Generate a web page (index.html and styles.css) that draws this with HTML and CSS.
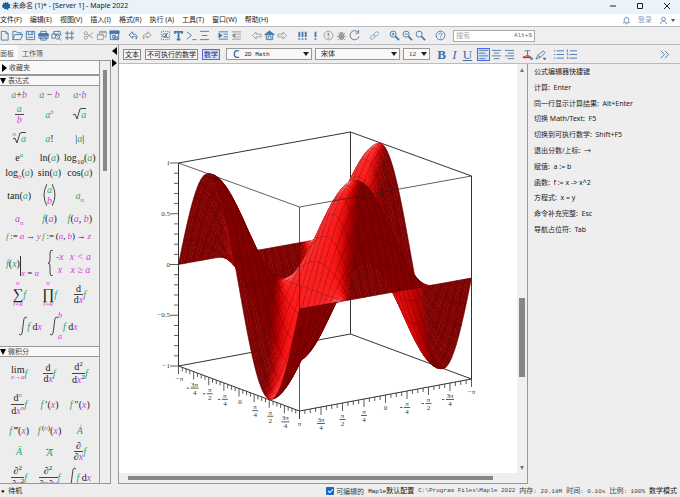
FILE: index.html
```html
<!DOCTYPE html>
<html lang="zh-CN">
<head>
<meta charset="utf-8">
<title>未命名 (1)* - [Server 1] - Maple 2022</title>
<link rel="stylesheet" href="styles.css">
</head>
<body>
<div class="app">
<header class="titlebar">
  <svg class="leaf" viewBox="0 0 12 12"><path d="M5 1l1.500 1.500L8.500 1l.5 2.500 2.500.5-1 2 1 2.500-3 .5.2 2L6 9.500 3.500 10 4 8 1.500 8.500 2 6.500.5 5.500l2-1L2.500 2l2 .8z"/></svg>
  <span class="caption">未命名 (1)* - [Server 1] - Maple 2022</span>
  <div class="window-buttons">
    <button aria-label="最小化"><svg viewBox="0 0 12 12"><path d="M3 6h6"/></svg></button>
    <button aria-label="最大化"><svg viewBox="0 0 12 12"><path d="M3.500 3.500h5v5h-5z"/></svg></button>
    <button aria-label="关闭"><svg viewBox="0 0 12 12"><path d="M3 3l6 6M9 3l-6 6"/></svg></button>
  </div>
</header>
<nav class="menubar">
  <button>文件(F)</button><button>编辑(E)</button><button>视图(V)</button><button>插入(I)</button><button>格式(R)</button><button>执行 (A)</button><button>工具(T)</button><button>窗口(W)</button><button>帮助(H)</button>
  <div class="account">
    <button aria-label="通知"><svg class="ic" viewBox="0 0 12 12"><path d="M2 9h8L9 7.500V5a3 3 0 0 0-6 0v2.500zM5 10.500h2M6 1v1"/></svg></button>
    <a href="#">登录</a>
    <button class="user" aria-label="账户"><svg class="ic" viewBox="0 0 12 12"><circle cx="6" cy="4" r="2.500"/><path d="M2 11c.3-3 2-4 4-4s3.700 1 4 4"/></svg><i class="caret"></i></button>
  </div>
</nav>
<div class="toolbar">
  <div class="half">
    <div class="group">
      <button aria-label="新建"><svg class="ic" viewBox="0 0 12 12"><path d="M2.500 1.500h5l2.500 2.500v7H2.500zM7.500 1.500V4H10"/></svg></button>
      <button aria-label="打开"><svg class="ic" viewBox="0 0 12 12"><path d="M1 10.500V1.500h3.500l1 1.500H10v2M1 10.500L3 5h8.500L9.500 10.500z"/></svg></button>
      <button aria-label="保存"><svg class="ic" viewBox="0 0 12 12"><path d="M1.500 1.500h9v9h-9zM3.500 1.500v3.500h5V1.500M7 2.500v1.500M3 8h6"/></svg></button>
      <button aria-label="打印"><svg class="ic" viewBox="0 0 12 12"><path d="M3 4V1.500h6V4M1 4.500h10V9H1zM3 7.500h6v3.500H3z"/><path class="solid" d="M1 4h10v2.500H1z"/></svg></button>
      <button aria-label="打印预览"><svg class="ic" viewBox="0 0 12 12"><path d="M3 4V1.500h7V4M1 9V4.500h10V6M1 9h3"/><circle cx="7" cy="7.500" r="2.500"/><path d="M9 9.500l2 2M3 3l5 5"/></svg></button>
      <button aria-label="表格"><svg class="ic" viewBox="0 0 12 12"><path d="M3.500 1v10M8.500 1v10M1 3.500h10M1 8.500h10"/></svg></button>
    </div>
    <div class="group gray">
      <button aria-label="剪切"><svg class="ic" viewBox="0 0 12 12"><circle cx="3" cy="3.500" r="1.700"/><circle cx="3" cy="8.500" r="1.700"/><path d="M4.500 4.500L11 9M4.500 7.500L11 3"/></svg></button>
      <button aria-label="复制"><svg class="ic" viewBox="0 0 12 12"><path d="M4 4V1.500h7v6H8.500M1.500 4.500h6.500v6H1.500zM4 2.500h7M1.500 5.500H8"/></svg></button>
      <button class="blue" aria-label="粘贴"><svg class="ic" viewBox="0 0 12 12"><path d="M1.500 1.500h9v9h-9z"/><path class="solid" d="M1 1h10v3H1z"/><path d="M4 6h3v3H4zM6 7.500h3.500v2.500H6z"/></svg></button>
    </div>
    <div class="group">
      <button aria-label="撤消"><svg class="ic" viewBox="0 0 12 12"><path d="M5 2L1 5.500 5 9V7q4-1 4 3 3-5-4-6z"/></svg></button>
      <button class="gray" aria-label="重做"><svg class="ic" viewBox="0 0 12 12"><path d="M7 2l4 3.500L7 9V7q-4-1-4 3-3-5 4-6z"/></svg></button>
    </div>
    <div class="group">
      <button aria-label="插入区域"><svg class="ic" viewBox="0 0 12 12"><path class="dots" d="M1.500 1.500h9v9h-9z"/><circle cx="5" cy="6" r="2"/><path d="M7 3.500l-.5 4.500h3M4 8l5-5"/></svg></button>
      <button aria-label="文本"><svg class="ic bold" viewBox="0 0 12 12"><path d="M2 4V2h8v2M6 2v8.500M4 10.500h4"/></svg></button>
      <button aria-label="提示符"><svg class="ic" viewBox="0 0 12 12"><path d="M1 2l5 4-5 4M7 10.500h4.500"/></svg></button>
      <button aria-label="节"><svg class="ic" viewBox="0 0 12 12"><path d="M1 1.500h10M3 6h6M1 10.500h10"/></svg></button>
    </div>
    <div class="group">
      <button aria-label="缩进"><svg class="ic" viewBox="0 0 12 12"><path d="M1 2h10M6 4.500h5M6 7.500h5M1 10h10"/><path class="solid" d="M1 3.500L4.500 6 1 8.500z"/></svg></button>
      <button class="gray" aria-label="取消缩进"><svg class="ic" viewBox="0 0 12 12"><path d="M1 2h10M6 4.500h5M6 7.500h5M1 10h10"/><path class="solid" d="M4.500 3.500L1 6l3.500 2.500z"/></svg></button>
    </div>
  </div>
  <div class="half loose">
    <div class="group gray">
      <button aria-label="后退"><svg class="ic" viewBox="0 0 12 12"><path d="M5.500 2L1.500 6l4 4V7.500H11v-3H5.500z"/></svg></button>
      <button class="blue" aria-label="主页"><svg class="ic" viewBox="0 0 12 12"><path class="solid" d="M6 1L.8 5h10.400z"/><path d="M2.500 5v5.500h7V5M4.500 10V6.500h3V10"/></svg></button>
      <button aria-label="前进"><svg class="ic" viewBox="0 0 12 12"><path d="M6.500 2l4 4-4 4V7.500H1v-3h5.500z"/></svg></button>
    </div>
    <div class="group">
      <button aria-label="全部执行"><svg class="ic bold" viewBox="0 0 12 12"><path d="M2.500 2v5.500M2.500 9v1.500M6 2v5.500M6 9v1.500M9.500 2v5.500M9.500 9v1.500"/></svg></button>
      <button aria-label="执行"><svg class="ic bold" viewBox="0 0 12 12"><path d="M6 2v5.500M6 9v1.500"/></svg></button>
      <button class="gray" aria-label="中断"><svg class="ic" viewBox="0 0 12 12"><circle cx="6" cy="6" r="4.800"/><path class="heavy" d="M6 3v3.500M6 8v1.200"/></svg></button>
      <button class="gray" aria-label="调试"><svg class="ic" viewBox="0 0 12 12"><ellipse class="solid" cx="6" cy="7" rx="2.600" ry="3.500"/><path d="M6 2v2M2 3l2 2M10 3L8 5M1 7h10M2 11l2-2M10 11L8 9M4 3h4"/></svg></button>
      <button aria-label="重新启动"><svg class="ic" viewBox="0 0 12 12"><path d="M10 2.500A5 5 0 1 0 11 7M10.500 0v3.500H7"/></svg></button>
    </div>
    <div class="group">
      <button class="pale" aria-label="链接"><svg class="ic" viewBox="0 0 12 12"><ellipse cx="4" cy="7.700" rx="2.800" ry="2" transform="rotate(-40 4 7.700)"/><ellipse cx="8" cy="4.300" rx="2.800" ry="2" transform="rotate(-40 8 4.300)"/></svg></button>
    </div>
    <div class="group">
      <button aria-label="放大"><svg class="ic" viewBox="0 0 12 12"><circle cx="4.500" cy="4.500" r="3.300"/><path d="M3 4.500h3M4.500 3v3"/><path class="heavy" d="M7 7l4 4"/></svg></button>
      <button aria-label="缩小"><svg class="ic" viewBox="0 0 12 12"><circle cx="4.500" cy="4.500" r="3.300"/><path d="M3 4.500h3"/><path class="heavy" d="M7 7l4 4"/></svg></button>
      <button aria-label="默认缩放"><svg class="ic" viewBox="0 0 12 12"><circle cx="4.500" cy="4.500" r="3.300"/><path class="heavy" d="M7 7l4 4"/></svg></button>
    </div>
    <div class="group">
      <button aria-label="帮助"><svg class="ic" viewBox="0 0 12 12"><circle cx="6" cy="6" r="4.800"/><path d="M4.300 5c0-2.300 3.600-2.200 3.400 0C7.600 6 6 6 6 7.300M6 8.500v1"/></svg></button>
    </div>
  </div>
  <label class="search"><input type="text" placeholder="搜索" aria-label="搜索"><kbd>Alt+S</kbd></label>
</div>

<div class="body">
  <aside class="sidebar">
    <div class="tabs"><button class="on">面板</button><button>工作簿</button></div>
    <div class="palette-wrap">
      <div class="palettes">
        <h2 class="shut"><i class="closed"></i>收藏夹</h2>
        <h2 class="open"><i class="opened"></i>表达式</h2>
        <div class="grid h16"><span><a>a</a>+<b>b</b></span><span><a>a</a> − <b>b</b></span><span><a>a</a>·<b>b</b></span></div>
        <div class="grid h24"><span class="frac"><a>a</a><b>b</b></span><span><a>a</a><sup><b>b</b></sup></span><span class="root"><svg viewBox="0 0 8 12"><path d="M0 7l2-1 2 5L7 1h1"/></svg><a class="bar">a</a></span></div>
        <div class="grid h24"><span class="root"><b class="index">n</b><svg viewBox="0 0 8 12"><path d="M0 7l2-1 2 5L7 1h1"/></svg><a class="bar">a</a></span><span><a>a</a>!</span><span>|<a>a</a>|</span></div>
        <div class="grid h14"><span>e<sup><a>a</a></sup></span><span>ln(<a>a</a>)</span><span>log<sub>10</sub>(<a>a</a>)</span></div>
        <div class="grid h16"><span>log<sub><b>b</b></sub>(<a>a</a>)</span><span>sin(<a>a</a>)</span><span>cos(<a>a</a>)</span></div>
        <div class="grid h30"><span>tan(<a>a</a>)</span><span class="binom"><svg viewBox="0 0 4 22"><path d="M4 0Q-2 11 4 22"/></svg><span class="stack"><a>a</a><b>b</b></span><svg viewBox="0 0 4 22"><path d="M0 0Q6 11 0 22"/></svg></span><span><a>a</a><sub><b>n</b></sub></span></div>
        <div class="grid h16"><span><b>a</b><sub><b>n</b></sub></span><span><a>f</a>(<b>a</b>)</span><span><a>f</a>(<b>a</b>, <b>b</b>)</span></div>
        <div class="pair h20"><span><a>f</a>&thinsp;:=&thinsp;<b>a</b>&thinsp;→&thinsp;<b>y</b></span><span><a>f</a>&thinsp;:=&thinsp;(<b>a</b>,&thinsp;<b>b</b>)&thinsp;→&thinsp;<b>z</b></span></div>
        <div class="pair h34"><span class="at"><a>f</a>(<a>x</a>)<span class="where"><b>x</b> = <b>a</b></span></span><span class="cases"><svg viewBox="0 0 5 26"><path d="M5 0Q2 0 2 3v7q0 3-2 3 2 0 2 3v7q0 3 3 3"/></svg><span class="case-grid"><b>-x</b><b>x &lt; a</b><b>x</b><b>x ≥ a</b></span></span></div>
        <div class="grid h26"><span class="big"><span class="op"><b>n</b><em>∑</em><b>i=k</b></span><a>f</a></span><span class="big"><span class="op"><b>n</b><em>∏</em><b>i=k</b></span><a>f</a></span><span class="big"><span class="frac"><u>d</u><u>d<b>x</b></u></span><a>f</a></span></div>
        <div class="pair wide h40"><span class="big"><svg class="int" viewBox="0 0 8 20"><path d="M8 2Q5-1 4.500 6l-1 8Q3 21 0 18"/></svg><a>f</a>&nbsp;d<b>x</b></span><span class="big"><svg class="int" viewBox="0 0 8 20"><path d="M8 2Q5-1 4.500 6l-1 8Q3 21 0 18"/></svg><span class="limits"><b>b</b><b>a</b></span><a>f</a>&nbsp;d<b>x</b></span></div>
        <h2 class="open"><i class="opened"></i>微积分</h2>
        <div class="grid h32"><span class="big"><span class="op lim"><u>lim</u><b>x→a</b></span><a>f</a></span><span class="big"><span class="frac"><u>d</u><u>d<b>x</b></u></span><a>f</a></span><span class="big"><span class="frac tall"><u>d<sup>2</sup></u><u>d<b>x</b><sup>2</sup></u></span><a>f</a></span></div>
        <div class="grid h30"><span class="big"><span class="frac tall"><u>d<sup><b>n</b></sup></u><u>d<b>x</b><sup><b>n</b></sup></u></span><a>f</a></span><span><a>f</a>&thinsp;′(<b>x</b>)</span><span><a>f</a>&thinsp;″(<b>x</b>)</span></div>
        <div class="grid h22"><span><a>f</a>&thinsp;‴(<b>x</b>)</span><span><a>f</a><sup>&thinsp;(<b>n</b>)</sup>(<b>x</b>)</span><span><a>Ȧ</a></span></div>
        <div class="grid h20"><span><a>Ä</a></span><span class="dot"><i>...</i><a>A</a></span><span class="big"><span class="frac"><u>∂</u><u>∂<b>x</b></u></span><a>f</a></span></div>
        <div class="grid h32"><span class="big"><span class="frac tall"><u>∂<sup>2</sup></u><u>∂<b>x</b><sup>2</sup></u></span><a>f</a></span><span class="big"><span class="frac tall"><u>∂<sup>2</sup></u><u>∂<b>x</b>∂<b>y</b></u></span><a>f</a></span><span class="big"><svg class="int" viewBox="0 0 8 20"><path d="M8 2Q5-1 4.500 6l-1 8Q3 21 0 18"/></svg><a>f</a>&nbsp;d<b>x</b></span></div>
      </div>
      <div class="rail"><i></i></div>
    </div>
  </aside>
  <div class="splitter"><i class="to-left"></i><i class="to-right"></i></div>
  <section class="main">
    <div class="format">
      <div class="modes"><button>文本</button><button>不可执行的数学</button><button class="on">数学</button></div>
      <span class="pick style"><i class="c">C</i><select aria-label="样式"><option>2D Math</option></select></span>
      <span class="pick font"><select aria-label="字体"><option>宋体</option></select></span>
      <span class="pick size"><select aria-label="字号"><option>12</option></select></span>
      <div class="letters"><button class="bd">B</button><button class="it">I</button><button class="un">U</button></div>
      <div class="group aligns">
        <button class="picked" aria-label="左对齐"><svg class="ic" viewBox="0 0 12 12"><path d="M1 1.500h10M1 4.500h7M1 7.500h10M1 10.500h7"/></svg></button>
        <button aria-label="居中"><svg class="ic" viewBox="0 0 12 12"><path d="M1 1.500h10M3 4.500h6M1 7.500h10M3 10.500h6"/></svg></button>
        <button aria-label="右对齐"><svg class="ic" viewBox="0 0 12 12"><path d="M1 1.500h10M4 4.500h7M1 7.500h10M4 10.500h7"/></svg></button>
      </div>
      <div class="group">
        <button aria-label="文字颜色"><svg class="ic" viewBox="0 0 12 12"><path d="M3 2h6M6 2v5M4 7h4"/><path class="red" d="M1 9h9"/><path class="solid" d="M9 10h3l-1.500 2z"/></svg></button>
        <button aria-label="突出显示"><svg class="ic" viewBox="0 0 12 12"><path d="M1 11l2-4 6-5 2 2-5 5zM3 7l3 2"/><path class="solid" d="M9 10h3l-1.500 2z"/></svg></button>
      </div>
      <div class="group lists">
        <button aria-label="项目符号"><svg class="ic" viewBox="0 0 12 12"><path d="M4 2h8M4 6h8M4 10h8M1 2h1.500M1 6h1.500M1 10h1.500"/></svg></button>
        <button aria-label="编号"><svg class="ic" viewBox="0 0 12 12"><path d="M4 2h8M4 6h8M4 10h8M1.500 .5v3M1 5h1v2M1 9h1v2"/></svg></button>
      </div>
      <button class="more" aria-label="更多"><svg class="ic" viewBox="0 0 12 12"><path d="M2 2l4 4-4 4M6.500 2l4 4-4 4"/></svg></button>
    </div>
    <div class="work">
      <div class="sheet">
        <div class="page"><svg id="plot" viewBox="120 64 398 408" role="img" aria-label="三维图"></svg></div>
        <div class="vbar"><i class="up"></i><i class="thumb"></i><i class="down"></i></div>
        <div class="hbar"><i></i></div>
      </div>
      <aside class="tips">
        <p>公式编辑器快捷键</p><p>计算: &nbsp;Enter</p><p>同一行显示计算结果: &nbsp;Alt+Enter</p><p>切换 Math/Text: &nbsp;F5</p><p>切换到可执行数学: &nbsp;Shift+F5</p><p>退出分数/上标: &nbsp;→</p><p>赋值: &nbsp;a := b</p><p>函数: &nbsp;f := x -&gt; x^2</p><p>方程式: &nbsp;x = y</p><p>命令补充完整: &nbsp;Esc</p><p>导航占位符: &nbsp;Tab</p>
      </aside>
    </div>
  </section>
</div>
<footer class="status">
  <span class="ready">● <b>待机</b></span>
  <label class="editable"><input type="checkbox" checked><b>可编辑的</b></label>
  <span class="dark">Maple<b>默认配置</b></span><span>C:\Program Files\Maple 2022</span><span><b>内存</b>: 20.18M</span><span><b>时间</b>: 0.10s</span><span><b>比例</b>: 100%</span><span class="dark"><b>数学模式</b></span>
</footer>
</div>
<script src="plot.js"></script>
</body>
</html>
```
FILE: styles.css
```css
*{box-sizing:border-box}
body{margin:0;background:#eee;color:#222;font:7px/10px "Noto Sans","Noto Sans CJK SC",sans-serif;overflow:hidden}
button{border:0;padding:0;margin:0;background:none;font:inherit;color:inherit;white-space:nowrap}
p,h2{margin:0;font:inherit}
i{font-style:normal}
.app{display:flex;flex-direction:column;height:100vh}
.titlebar{display:flex;align-items:center;height:14px;flex:none;background:#ebf2f9;padding:0 0 2px 1px}
.leaf{width:10px;height:10px;fill:#14639b;margin-right:1px}
.caption{font-size:7px}
.window-buttons{margin-left:auto;display:flex;gap:15px;padding-right:7px}
.window-buttons button,.window-buttons svg{width:12px;height:12px;display:block}
.window-buttons svg{fill:none;stroke:#222;stroke-width:1}
.menubar{display:flex;align-items:center;gap:8px;height:12px;flex:none;background:#fff}
.account{margin-left:auto;display:flex;align-items:center;gap:7px;padding-right:5px;color:#8ca4c0}
.account a{color:inherit;text-decoration:none}
.account button{display:flex;align-items:center}
.account .ic{width:9px;height:9px}
.user{gap:3px}
.caret{border:2px solid transparent;border-top:3px solid #555;border-bottom:0}
.ic{width:11px;height:11px;display:block;fill:none;stroke:#4678aa;stroke-width:1}
.ic .solid{fill:#4678aa}
.ic .dots{stroke-dasharray:1 1}
.ic .red{stroke:#e02020;stroke-width:2}
.ic.bold,.ic .heavy{stroke-width:2}
.gray .ic{stroke:#9a9a9a}
.gray .ic .solid{fill:#9a9a9a}
.gray .blue .ic{stroke:#4678aa}
.gray .blue .solid{fill:#4678aa}
.pale .ic{stroke:#8faccb}
.toolbar{display:flex;align-items:center;height:19px;flex:none;border-top:1px solid #bbb;border-bottom:1px solid #bbb;background:#efefef}
.half{display:flex;gap:6px;margin-left:-2px}
.loose{gap:7px;margin-left:7px}
.group{display:flex}
.group button{width:13px;height:13px;display:grid;place-items:center}
.search{display:flex;align-items:center;width:82px;height:12px;margin-left:6px;background:#fff;border:1px solid #aaa;padding:0 2px}
.search input{border:0;outline:0;padding:0;min-width:0;flex:1;font:inherit;background:none}
.search input::placeholder{color:#aaa}
.search kbd{font:6px/8px "Liberation Mono",monospace;color:#666}
.body{display:flex;flex:1;min-height:0}
.sidebar{width:111px;flex:none;display:flex;flex-direction:column}
.tabs{display:flex;height:15px;flex:none;font-family:"Noto Sans CJK SC",sans-serif;color:#555}
.tabs button{padding:0 4px}
.tabs .on{background:#fafafa;padding:0 4px 0 0}
.palette-wrap{display:flex;flex:1;min-height:0;border:1px solid #999;border-left:0}
.palettes{flex:1;min-width:0;overflow:hidden}
.palettes h2{display:flex;align-items:center;gap:2px;background:#f8f8f8;border-bottom:1px solid #999;color:#444}
.palettes .shut{height:14px}
.palettes .open{height:11px;border-top:1px solid #999}
.closed{width:5px;height:0;border:4px solid transparent;border-left:5px solid #000;border-right:0;margin-left:2px}
.opened{width:6px;border:3px solid transparent;border-top:6px solid #000;border-bottom:0}
.rail{width:11px;border-left:1px solid #999;background:#eee;padding:9px 2px}
.rail i{display:block;width:4px;margin-left:1px;height:101px;background:#888}
.grid,.pair{font:10px/11px "Liberation Serif",serif;color:#222;padding:0 4px;background:#ededed}
.grid{display:grid;grid-template-columns:repeat(3,minmax(0,1fr))}
.pair{display:flex;justify-content:space-between;align-items:center;padding:0 8px 0 6px}
.pair.wide{justify-content:center;gap:8px}
.grid>span,.pair>span{white-space:nowrap}
.grid{place-items:center}
.grid a,.pair a,.grid b,.pair b{font-style:italic;font-weight:400;color:#28a96b}
.grid b,.pair b{color:#d63bd6}
.grid u,.pair u{text-decoration:none}
.grid sup,.grid sub{font-size:7px;line-height:0}
.h14{height:14px}.h16{height:16px}.h20{height:20px}.h22{height:22px}.h24{height:24px}.h26{height:26px}.h30{height:30px}.h32{height:32px}.h34{height:34px}.h40{height:40px}
.pair.h20{font-size:9px}
.frac{display:inline-flex;flex-direction:column;align-items:center;line-height:10px}
.frac>:first-child{border-bottom:1px solid #444;padding:0 2px;width:100%;text-align:center}
.tall{line-height:12px}
.root{display:flex;align-items:center}
.root svg{width:8px;height:12px}
.grid svg,.pair svg{fill:none;stroke:#444;stroke-width:1}
.bar{border-top:1px solid #444}
.root .index{font-size:7px;align-self:flex-start;line-height:5px;margin-right:-3px}
.binom{display:flex;align-items:center}
.binom svg{width:4px;height:22px}
.stack{display:flex;flex-direction:column;line-height:11px}
.at{display:flex;align-items:center}
.where{border-left:1px solid #333;height:20px;display:flex;align-items:flex-end;font-size:9px;line-height:6px;margin-top:6px;white-space:pre}
.cases{display:flex;align-items:center;gap:3px}
.cases svg{width:5px;height:26px}
.case-grid{display:grid;grid-template-columns:auto auto;justify-items:center;column-gap:6px;line-height:13px}
.big{display:flex;align-items:center}
.op{display:flex;flex-direction:column;align-items:center;line-height:7px;font-size:7px}
.op em{font:15px/14px "Liberation Serif",serif}
.lim u{font-size:10px;line-height:8px}
.int{width:8px;height:20px}
.limits{display:flex;flex-direction:column;justify-content:space-between;height:29px;line-height:8px;font-size:8px;margin-right:1px}
.dot{display:flex;flex-direction:column;align-items:center;line-height:9px}
.dot i{line-height:2px}
.splitter{width:8px;flex:none;padding-top:2px;display:flex;flex-direction:column;gap:4px;align-items:center;border-right:1px solid #999}
.to-left,.to-right{border:4px solid transparent}
.to-left{border-right:5px solid #000;border-left:0}
.to-right{border-left:5px solid #000;border-right:0}
.main{flex:1;min-width:0;display:flex;flex-direction:column}
.format{display:flex;align-items:center;height:19px;flex:none;padding:0 10px 0 4px;border-bottom:1px solid #bbb}
.modes{display:flex;gap:4px;margin-right:6px}
.modes button{height:11px;line-height:9px;border:1px solid #888;padding:0 1px;font-family:"Noto Sans CJK SC",sans-serif;background:#f5f5f5}
.modes .on{border-color:#5a6ad8;background:#d5dcf6;color:#1c2e80}
.pick{display:flex;position:relative;align-items:center;height:12px;border:1px solid #999;background:#f8f8f8;margin-right:3px}
.pick select{appearance:none;border:0;background:none;flex:1;min-width:0;font:7px/9px "Liberation Serif","Noto Sans CJK SC",serif;color:#222;padding:0 0 0 5px;outline:0}
.pick::after{content:"";border:3px solid transparent;border-top:4px solid #222;border-bottom:0;margin-right:2px}
.style{width:86px}.font{width:85px}.size{width:27px}
.style select{font-family:"Liberation Mono",monospace;font-size:6px}
.c{font:600 10px/10px "Noto Sans",sans-serif;color:#3a6ea5;margin-left:6px}
.letters{display:flex;margin-left:2px;margin-right:3px;font:13px/13px "Liberation Serif",serif;color:#3a6ea5}
.letters button{width:13px}
.letters .bd{font-weight:700}.letters .it{font-style:italic}.letters .un{text-decoration:underline}
.aligns{margin-right:5px}
.aligns .picked{outline:1px solid #5064e8;outline-offset:-1px;background:#dce4fa}
.lists{margin-left:5px}
.format>.more{margin-left:auto}
.work{display:flex;flex:1;min-height:0}
.sheet{width:409px;flex:none;display:grid;grid-template:1fr 10px/1fr 10px;border-right:1px solid #999;border-bottom:1px solid #999}
.page{background:#fff;min-height:0;overflow:hidden}
.page svg{display:block;width:100%;height:auto}
.vbar{display:flex;flex-direction:column;align-items:center;background:#f0f0f0;padding:4px 0 3px}
.up,.down{border:2px solid transparent}
.up{border-bottom:4px solid #777;border-top:0}
.down{border-top:4px solid #777;border-bottom:0;margin-top:auto}
.thumb{width:6px;height:79px;margin-top:226px;background:#868686}
.hbar{grid-column:1/3;display:flex;align-items:center;padding-left:9px}
.hbar i{width:365px;height:4px;background:#868686}
.tips{flex:1;height:171px;padding:3px 0 0 6px;display:flex;flex-direction:column;justify-content:space-between}
.status{display:flex;align-items:center;gap:4px;height:13px;flex:none;padding:0 3px 0 1px;font:6px/10px "Liberation Mono","Noto Sans CJK SC",monospace;color:#444;white-space:nowrap}
.status b{font:7px/10px "Noto Sans CJK SC",sans-serif}
.ready{margin-right:auto;color:#111}
.editable{display:flex;align-items:center;gap:2px}
.editable input{appearance:none;width:8px;height:8px;margin:0;background:#1668c5;border-radius:1px;display:grid;place-items:center}
.editable input::after{content:"";width:4px;height:2px;border:solid #fff;border-width:0 0 1px 1px;rotate:-45deg}
.dark{color:#111}
.tick{stroke:#333;stroke-width:.8}
.box{fill:none;stroke:#333;stroke-width:1}
.axis{font:7px "Liberation Serif",serif;fill:#333;text-anchor:middle}
.axis.end{text-anchor:end}
.mesh{fill:none;stroke:#200;stroke-width:.5;stroke-opacity:.4}
.front{stroke:#222;stroke-width:.9;stroke-opacity:.8}
```
FILE: plot.js
```js
// Surface z = sin(u) cos(v) over [-pi, pi] squared, drawn back to front.
const svg = document.getElementById('plot');
const P = Math.PI;
const out = [];
const px = (u, v) => 179.5 + 121 * (u + P) / (2 * P) + 172 * (P - v) / (2 * P);
const py = (u, v, z) => 264.5 + 44.500 * (u + P) / (2 * P) - 31 * (P - v) / (2 * P) - 101.5 * z;
const norm = a => { const l = Math.hypot(...a); return a.map(k => k / l); };
const dot = (a, b) => a[0] * b[0] + a[1] * b[1] + a[2] * b[2];
const eye = [0.79, 0.557, 0.256];
const lamp = norm([-0.6, 0.6, 0.5]);
const shine = norm([-0.3, 0.5, 0.85]);

function shade(u, v) {
  let n = norm([-P * Math.cos(u) * Math.cos(v), P * Math.sin(u) * Math.sin(v), 1]);
  if (dot(n, eye) < 0) n = n.map(k => -k);
  const d = Math.max(0, dot(n, lamp));
  const s = Math.pow(Math.max(0, dot(n, shine)), 16);
  const r = Math.min(255, 128 + 215 * d);
  const g = Math.min(160, 70 * Math.max(0, d - 0.25) + 90 * s);
  return `rgb(${r | 0},${g | 0},${g | 0})`;
}
const line = (a, b, c, d, cls) => out.push(`<path class="${cls}" d="M${a} ${b}L${c} ${d}"/>`);

line(179.5, 163, 351.5, 132, 'box');
line(351.5, 132, 472.5, 176, 'box');
line(351.5, 132, 351.5, 334, 'box');
line(179.5, 366, 351.5, 334, 'box');
line(351.5, 334, 472.5, 379, 'box');

const N = 72, step = 2 * P / N;
const pt = (i, j) => {
  const u = -P + i * step, v = -P + j * step;
  return px(u, v).toFixed(2) + ' ' + py(u, v, Math.sin(u) * Math.cos(v)).toFixed(2);
};
for (let i = 0; i < N; i++) for (let j = 0; j < N; j++) {
  const a = pt(i, j), b = pt(i + 1, j), c = pt(i + 1, j + 1), d = pt(i, j + 1);
  const fill = shade(-P + (i + .5) * step, -P + (j + .5) * step);
  out.push(`<path fill="${fill}" stroke="${fill}" stroke-width=".5" d="M${a}L${b}L${c}L${d}z"/>`);
  let m = '';
  if (i % 3 === 0) m += `M${a}L${d}`;
  if (i % 3 === 2) m += `M${b}L${c}`;
  if (j % 3 === 0) m += `M${a}L${b}`;
  if (j % 3 === 2) m += `M${d}L${c}`;
  if (m) out.push(`<path class="mesh" d="${m}"/>`);
}

line(179.5, 163, 300.5, 207, 'box front');
line(300.5, 207, 472.5, 176, 'box front');
line(300.5, 207, 300.5, 411, 'box front');
line(179.5, 366, 300.5, 411, 'box');
line(300.5, 411, 472.5, 379, 'box');
line(179.5, 163, 179.5, 366, 'box');
line(472.5, 176, 472.5, 379, 'box');

for (let k = 0; k <= 20; k++) {
  const y = 163 + k * 10.15, major = k % 5 === 0;
  line(major ? 171 : 175, y, 179, y, 'tick');
  if (major) out.push(`<text class="axis end" x="171" y="${y + 2}">${['1', '0.5', '0', '−0.5', '−1'][k / 5]}</text>`);
}
const names = ['-π', '-3π/4', '-π/2', '-π/4', '0', 'π/4', 'π/2', '3π/4', 'π'];
function label(x, y, name) {
  const minus = name.startsWith('-');
  const [top, bottom] = name.replace('-', '').split('/');
  if (!bottom) {
    out.push(`<text class="axis" x="${x}" y="${y + 3}">${minus ? '−' : ''}${top}</text>`);
    return;
  }
  const w = top.length > 1 ? 4 : 3;
  out.push(`<text class="axis" x="${x}" y="${y + 3}">${top}</text><text class="axis" x="${x}" y="${y + 11}">${bottom}</text>`);
  line(x - w, y + 4.5, x + w, y + 4.5, 'tick');
  if (minus) line(x - w - 4, y + 4.5, x - w - 1.500, y + 4.5, 'tick');
}
for (let k = 0; k <= 32; k++) {
  const len = k % 4 ? 4 : 8, t = k / 32;
  const ax = 179.5 + 121 * t, ay = 366 + 45 * t;
  const bx = 300.5 + 172 * t, by = 411 - 32 * t;
  line(ax, ay, ax, ay + len, 'tick');
  line(bx, by, bx, by + len, 'tick');
  if (k % 4 === 0) {
    if (k < 32) label(ax + 1, ay + 12, names[k / 4]);
    label(bx, by + 12, names[8 - k / 4]);
  }
}
svg.innerHTML = out.join('');
```
